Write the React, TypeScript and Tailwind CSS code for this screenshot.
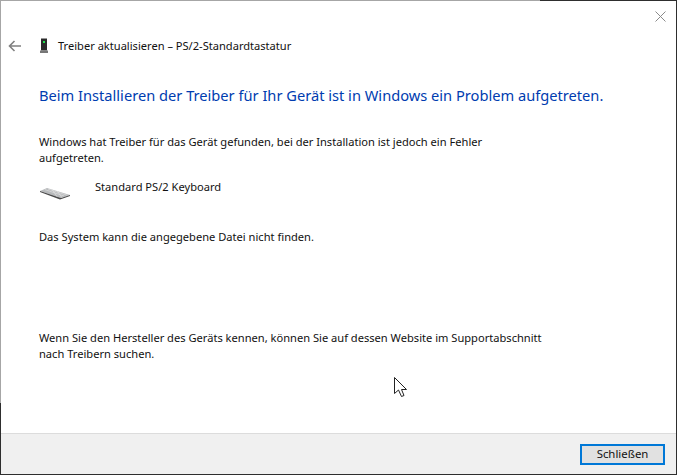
import React from "react";

const DeviceIcon = () => (
  <svg width="16" height="16" viewBox="0 0 16 16" className="shrink-0">
    <path d="M5 0.5h6v12H5z" fill="#2a2a2a" />
    <path d="M4 12.5h8v2.5H4z" fill="#777" />
    <path d="M7 3h2v2H7z" fill="#1fe04a" />
  </svg>
);

const KeyboardIcon = () => (
  <svg width="34" height="16" viewBox="0 0 34 16" className="shrink-0">
    <path d="M8 2L31 9L22 12L1 5Z" fill="#b8babc" />
    <path d="M1 5L22 12L31 9L31 10L21 13.5L1 6Z" fill="#4a4a4a" />
    <path d="M6 3.6L25 10M9 3L28 9.2M13 3.2L18 10.6M18 4.8L23 11.6" stroke="#e4e4e4" strokeWidth="0.6" fill="none" />
  </svg>
);

const Cursor = () => (
  <svg width="14" height="21" viewBox="0 0 14 21" className="absolute left-[393px] top-[376px]">
    <path d="M0.5 0.5V16.5L4.5 13L7.5 19.5L10 18.5L7.5 12.5H12.5Z" fill="#fff" stroke="#222" strokeWidth="1" />
  </svg>
);

export default function App() {
  return (
    <div className="relative flex h-[475px] w-[677px] flex-col border border-t-[#a6a6a6] border-r-[#2e2e2e] border-b-[#2e2e2e] border-l-[#a6a6a6] bg-white font-['Noto_Sans',sans-serif] text-[11.12px] leading-4 text-[#111]">
      <div className="absolute -top-px left-[539px] -right-px h-px bg-[#2e2e2e]" />
      <div className="absolute -left-px top-[402px] -bottom-px w-px bg-[#2e2e2e]" />

      <div className="flex justify-end pr-[10px] pt-[10px]">
        <svg width="11" height="11" viewBox="0 0 11 11">
          <path d="M0.5 0.5L10.5 10.5M10.5 0.5L0.5 10.5" stroke="#8a8a8a" strokeWidth="1" />
        </svg>
      </div>

      <div className="flex flex-1 flex-col pl-[38px]">
        <div className="-ml-[31px] mt-[16px] flex items-center">
          <svg width="14" height="12" viewBox="0 0 14 12">
            <path d="M13 6H2M6.5 1L1.5 6L6.5 11" stroke="#808080" strokeWidth="1.6" fill="none" />
          </svg>
          <div className="ml-[14px]">
            <DeviceIcon />
          </div>
          <span className="ml-[6px] text-[11.1px]">Treiber aktualisieren – PS/2-Standardtastatur</span>
        </div>

        <h1 className="mt-[31px] text-[14.65px] leading-5 font-normal text-[#003cb0]">
          Beim Installieren der Treiber für Ihr Gerät ist in Windows ein Problem aufgetreten.
        </h1>

        <p className="mt-[29px] w-[470px]">
          Windows hat Treiber für das Gerät gefunden, bei der Installation ist jedoch ein Fehler aufgetreten.
        </p>

        <div className="mt-[13px] flex">
          <div className="mt-[7px]">
            <KeyboardIcon />
          </div>
          <span className="ml-[22px]">Standard PS/2 Keyboard</span>
        </div>

        <p className="mt-[27px]">Das System kann die angegebene Datei nicht finden.</p>

        <p className="mt-[85px] w-[530px]">
          Wenn Sie den Hersteller des Geräts kennen, können Sie auf dessen Website im Supportabschnitt nach Treibern suchen.
        </p>
      </div>

      <div className="flex h-[41px] items-center justify-end border-t border-[#dcdcdc] bg-[#f0f0f0] pr-[11px]">
        <button
          type="button"
          className="flex h-[21px] w-[85px] items-center justify-center border-2 border-[#0078d7] bg-[#e1e1e1] text-[11.4px]"
        >
          Schließen
        </button>
      </div>

      <Cursor />
    </div>
  );
}
